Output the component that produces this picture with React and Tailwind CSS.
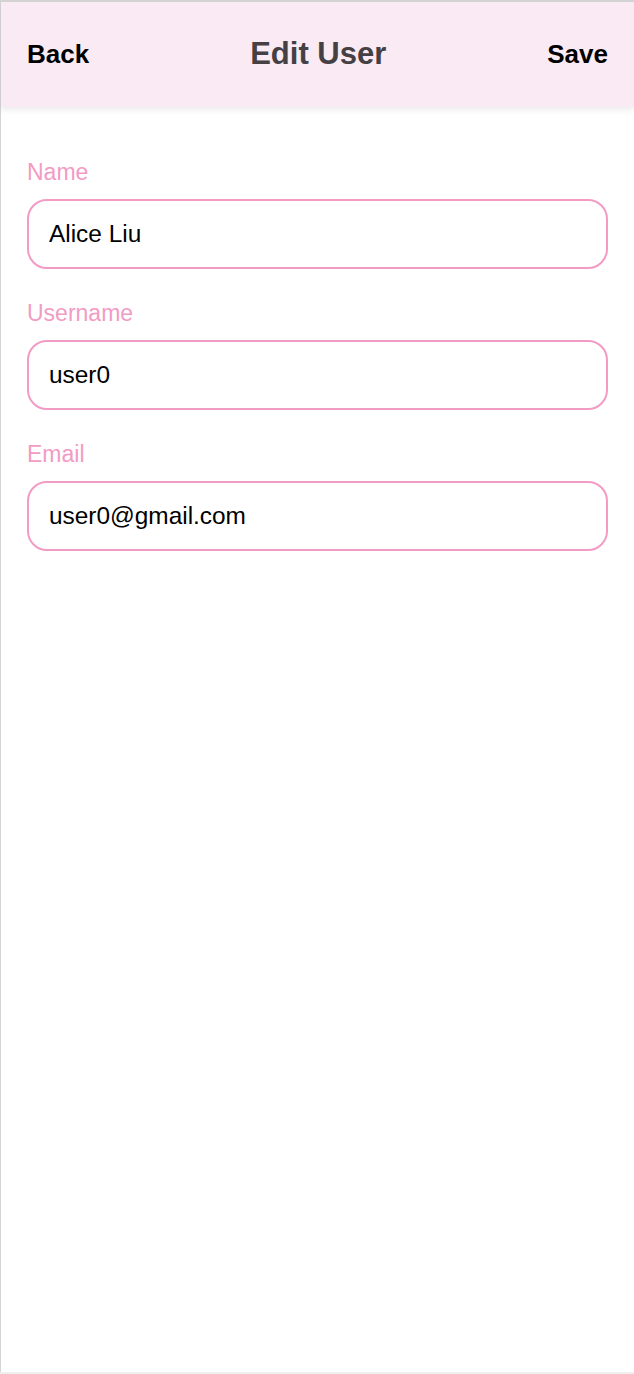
import React, { useState } from 'react';

const FIELDS = [
  { key: 'name', label: 'Name' },
  { key: 'username', label: 'Username' },
  { key: 'email', label: 'Email' },
];

const EditUser = () => {
  const [form, setForm] = useState({
    name: 'Alice Liu',
    username: 'user0',
    email: 'user0@gmail.com',
  });

  return (
    <div className="h-[1374px] bg-[#efefef] font-['Liberation_Sans',Arial,sans-serif]">
      <div className="h-[1372px] bg-white border-t-2 border-l border-[#d4d4d4] flex flex-col">
        {/* Header */}
        <header className="h-[105px] bg-[#f9eaf3] px-[26px] flex items-center justify-between shadow-[0_3px_6px_rgba(0,0,0,0.08)] relative z-10">
          <button className="text-[26px] font-bold text-black">Back</button>
          <h1 className="text-[31px] font-bold text-[#444044]">Edit User</h1>
          <button className="text-[26px] font-bold text-black">Save</button>
        </header>

        {/* Form */}
        <div className="px-[26px] pt-[53px]">
          {FIELDS.map(({ key, label }) => (
            <div key={key} className="mb-[32px]">
              <label className="block text-[23px] leading-[24px] text-[#f29bc4] mb-[15px]">{label}</label>
              <input
                value={form[key]}
                onChange={e => setForm({ ...form, [key]: e.target.value })}
                className="w-full h-[70px] border-2 border-[#f29bc4] rounded-[20px] px-[20px] text-[24.4px] text-black outline-none bg-white"
              />
            </div>
          ))}
        </div>
      </div>
    </div>
  );
};

export default EditUser;
